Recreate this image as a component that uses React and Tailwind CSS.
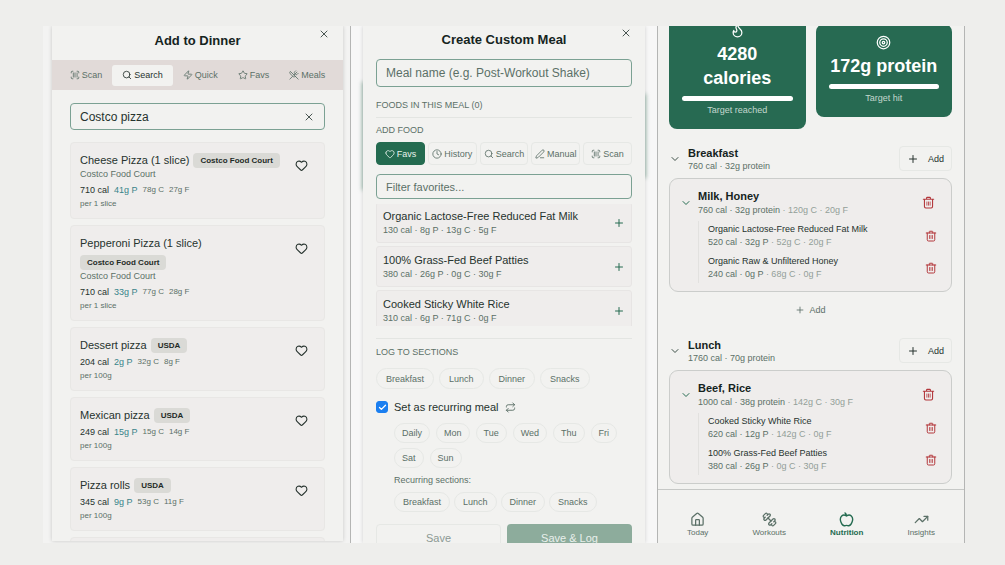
import React from "react";
import {
  ChevronDown, Clock, Flame, Heart, House, PenLine, Plus, Repeat,
  ScanBarcode, Search, Star, Target, TrendingUp, UtensilsCrossed, X, Zap, Check,
} from "lucide-react";

function Svg({ size, children }) {
  return (
    <svg width={size} height={size} viewBox="0 0 24 24" fill="none" stroke="currentColor" strokeWidth="2" strokeLinecap="round" strokeLinejoin="round" aria-hidden="true">
      {children}
    </svg>
  );
}

function TrashIcon({ size }) {
  return (
    <Svg size={size}>
      <path d="M2.5 6h19M8.5 6V3.5a1 1 0 0 1 1-1h5a1 1 0 0 1 1 1V6M4.5 6v13.5a2.5 2.5 0 0 0 2.5 2.5h10a2.5 2.5 0 0 0 2.5-2.5V6" />
      <path strokeWidth="1.5" d="M9 11v6M12 11v6M15 11v6" />
    </Svg>
  );
}

function AppleIcon({ size }) {
  return (
    <Svg size={size}>
      <path strokeWidth="2.2" d="M12 6.5C9.5 4.500 6.500 4.300 4.300 6.300 1.800 8.700 1.800 13 3.200 16.500 4.400 19.700 6.300 22 8.600 22c1.300 0 2-.7 3.400-.7s2.100.7 3.400.7c2.300 0 4.200-2.300 5.400-5.500 1.400-3.500 1.400-7.800-1.100-10.200C17.500 4.300 14.500 4.500 12 6.500ZM12 6.500C12 4.500 11.500 2.500 9.500 1.500" />
    </Svg>
  );
}

function DumbbellIcon({ size }) {
  return (
    <Svg size={size}>
      <path d="M14.400 14.400 9.600 9.600" />
      <path d="M18.657 21.485a2 2 0 1 1-2.829-2.828l-1.767 1.768a2 2 0 1 1-2.829-2.829l6.364-6.364a2 2 0 1 1 2.829 2.829l-1.768 1.767a2 2 0 1 1 2.828 2.829z" />
      <path d="M6.404 12.768a2 2 0 1 1-2.829-2.829l1.768-1.767a2 2 0 1 1-2.828-2.829l2.828-2.828a2 2 0 1 1 2.829 2.828l1.767-1.768a2 2 0 1 1 2.829 2.829z" />
    </Svg>
  );
}

const SEARCH_TABS = [
  { label: "Scan", Icon: ScanBarcode },
  { label: "Search", Icon: Search, active: true },
  { label: "Quick", Icon: Zap },
  { label: "Favs", Icon: Star },
  { label: "Meals", Icon: UtensilsCrossed },
];

const RESULTS = [
  { name: "Cheese Pizza (1 slice)", badge: "Costco Food Court", brand: "Costco Food Court", cal: 710, p: 41, c: 78, f: 27, per: "per 1 slice" },
  { name: "Pepperoni Pizza (1 slice)", badge: "Costco Food Court", brand: "Costco Food Court", cal: 710, p: 33, c: 77, f: 28, per: "per 1 slice" },
  { name: "Dessert pizza", badge: "USDA", cal: 204, p: 2, c: 32, f: 8, per: "per 100g" },
  { name: "Mexican pizza", badge: "USDA", cal: 249, p: 15, c: 15, f: 14, per: "per 100g" },
  { name: "Pizza rolls", badge: "USDA", cal: 345, p: 9, c: 53, f: 11, per: "per 100g" },
];

const MEAL_TABS = [
  { label: "Favs", Icon: Heart, active: true },
  { label: "History", Icon: Clock },
  { label: "Search", Icon: Search },
  { label: "Manual", Icon: PenLine },
  { label: "Scan", Icon: ScanBarcode },
];

const FAVORITES = [
  { name: "Organic Lactose-Free Reduced Fat Milk", meta: "130 cal · 8g P · 13g C · 5g F" },
  { name: "100% Grass-Fed Beef Patties", meta: "380 cal · 26g P · 0g C · 30g F" },
  { name: "Cooked Sticky White Rice", meta: "310 cal · 6g P · 71g C · 0g F" },
];

const SECTIONS = ["Breakfast", "Lunch", "Dinner", "Snacks"];
const DAYS = ["Daily", "Mon", "Tue", "Wed", "Thu", "Fri", "Sat", "Sun"];

const MEALS = [
  {
    section: "Breakfast", total: "760 cal · 32g protein", name: "Milk, Honey",
    main: "760 cal · 32g protein", rest: " · 120g C · 20g F", more: true,
    items: [
      { name: "Organic Lactose-Free Reduced Fat Milk", main: "520 cal · 32g P", rest: " · 52g C · 20g F" },
      { name: "Organic Raw & Unfiltered Honey", main: "240 cal · 0g P", rest: " · 68g C · 0g F" },
    ],
  },
  {
    section: "Lunch", total: "1760 cal · 70g protein", name: "Beef, Rice",
    main: "1000 cal · 38g protein", rest: " · 142g C · 30g F",
    items: [
      { name: "Cooked Sticky White Rice", main: "620 cal · 12g P", rest: " · 142g C · 0g F" },
      { name: "100% Grass-Fed Beef Patties", main: "380 cal · 26g P", rest: " · 0g C · 30g F" },
    ],
  },
];

const NAV = [
  { label: "Today", Icon: House },
  { label: "Workouts", Icon: DumbbellIcon },
  { label: "Nutrition", Icon: AppleIcon, active: true },
  { label: "Insights", Icon: TrendingUp },
];

function ResultCard({ item }) {
  return (
    <li className="flex rounded-[4px] border border-[#e8e7e5] bg-[#efedec] pt-[10px] pr-2 pb-[9px] pl-[9px]">
      <div className="min-w-0 flex-1">
        <div className="flex flex-wrap items-center gap-1">
          <h3 className="text-[11px] leading-[15px] text-[#26332e]">{item.name}</h3>
          <span className="rounded-[4px] bg-[#dadad6] px-[7px] text-[8px] leading-[15px] font-bold text-[#1f2b27]">{item.badge}</span>
        </div>
        {item.brand && <p className="text-[9px] leading-[13px] text-[#5b7067]">{item.brand}</p>}
        <p className="mt-[3px] flex items-center gap-[5px] text-[9px] leading-[12px]">
          <span className="text-[#26332e]">{item.cal} cal</span>
          <span className="text-[#38848a]">{item.p}g P</span>
          <span className="text-[8px] text-[#5b7067]">{item.c}g C</span>
          <span className="text-[8px] text-[#5b7067]">{item.f}g F</span>
        </p>
        <p className="mt-0.5 text-[8px] leading-[11px] text-[#5b7067]">{item.per}</p>
      </div>
      <button aria-label={`Favorite ${item.name}`} className="mt-px flex h-[22px] w-[30px] items-center justify-center text-[#26332e]">
        <Heart size={13} strokeWidth={2} />
      </button>
    </li>
  );
}

function AddToDinner() {
  return (
    <section className="flex min-w-0 overflow-hidden border-r border-[#b4b5b4] bg-[#f3f3f2] pr-[7px] pl-[9px]">
      <div className="mb-0.5 flex min-w-0 flex-1 flex-col overflow-hidden bg-[#f2f2f0] shadow-[0_0_4px_rgba(0,0,0,0.18)]">
        <header className="relative flex h-[34px] shrink-0 items-center justify-center pb-[4px]">
          <h2 className="text-[13px] leading-[16px] font-bold text-[#15241e]">Add to Dinner</h2>
          <button aria-label="Close" className="absolute top-[2px] right-[13px] text-[#4a5652]"><X size={12} /></button>
        </header>
        <nav className="flex h-[30px] shrink-0 items-center justify-center bg-[#e1dad8]">
          {SEARCH_TABS.map(({ label, Icon, active }) => (
            <button key={label} className={`flex h-[21px] items-center gap-0.5 rounded-[3px] px-[10px] text-[9px] leading-[12px] ${active ? "bg-[#f2f2f0] text-[#26332e]" : "text-[#5b7067]"}`}>
              <Icon size={10} />{label}
            </button>
          ))}
        </nav>
        <div className="flex min-h-0 flex-1 flex-col gap-3 overflow-hidden px-[18px] pt-[13px]">
          <div className="flex h-[27px] shrink-0 items-center rounded-[4px] border border-[#7ba193] pr-[9px] pl-[9px]">
            <input aria-label="Search foods" defaultValue="Costco pizza" className="min-w-0 flex-1 bg-transparent text-[12px] text-[#26332e] outline-none" />
            <button aria-label="Clear search" className="text-[#4a5652]"><X size={12} /></button>
          </div>
          <ul className="flex flex-col gap-1.5">
            {RESULTS.map((item) => <ResultCard key={item.name} item={item} />)}
            <li className="h-3 shrink-0 rounded-t-[4px] border border-[#e8e7e5] bg-[#efedec]" />
          </ul>
        </div>
      </div>
    </section>
  );
}

const PILL_SIZES = {
  day: "h-5 px-[7px]",
  small: "h-5 px-2",
  base: "h-[21px] px-[9px]",
};

function Pill({ children, size = "base" }) {
  return (
    <button className={`rounded-full border border-[#e6e8e5] text-[9px] leading-[12px] text-[#5b7067] ${PILL_SIZES[size]}`}>{children}</button>
  );
}

function CreateMeal() {
  return (
    <section className="relative isolate flex min-w-0 overflow-hidden border-r border-[#b4b5b4] bg-[#f7f7f7] px-3">
      <div className="absolute top-[56px] left-[11px] -z-10 h-[108px] w-3 bg-[#9fbcaf] blur-[2px]" />
      <div className="absolute top-[68px] right-[11px] -z-10 h-[84px] w-3 bg-[#9fbcaf] blur-[2px]" />
      <div className="flex min-w-0 flex-1 flex-col bg-[#f2f2f0] px-[13px] shadow-[0_0_4px_rgba(0,0,0,0.16)]">
        <header className="relative flex h-[33px] shrink-0 items-center justify-center pb-[6px]">
          <h2 className="text-[13px] leading-[16px] font-bold text-[#15241e]">Create Custom Meal</h2>
          <button aria-label="Close" className="absolute top-px right-0 text-[#4a5652]"><X size={12} /></button>
        </header>
        <input aria-label="Meal name" placeholder="Meal name (e.g. Post-Workout Shake)" className="h-[28px] shrink-0 rounded-[4px] border border-[#7ba193] px-[9px] text-[12px] outline-none placeholder:text-[#5b7067]" />
        <h3 className="mt-3 text-[9px] leading-[12px] text-[#5b7067]">FOODS IN THIS MEAL (0)</h3>
        <hr className="mt-1.5 border-[#e3e5e2]" />
        <h3 className="mt-1.5 text-[9px] leading-[12px] text-[#5b7067]">ADD FOOD</h3>
        <div className="mt-1.5 grid shrink-0 grid-cols-5 gap-[3px]">
          {MEAL_TABS.map(({ label, Icon, active }) => (
            <button key={label} className={`flex h-[23px] items-center justify-center gap-0.5 rounded-[4px] border text-[9px] leading-[12px] ${active ? "border-[#246b50] bg-[#246b50] text-[#e8f2ec]" : "border-[#e6e8e5] text-[#5b7067]"}`}>
              <Icon size={10} className="shrink-0" />{label}
            </button>
          ))}
        </div>
        <input aria-label="Filter favorites" placeholder="Filter favorites..." className="mt-[9px] h-[25px] shrink-0 rounded-[4px] border border-[#7ba193] px-[9px] text-[11px] outline-none placeholder:text-[#5b7067]" />
        <div className="mt-[5px] h-[122px] shrink-0 overflow-hidden">
          <ul className="-mt-0.5 flex flex-col gap-[3px]">
            {FAVORITES.map((f) => (
              <li key={f.name} className="flex items-center justify-between rounded-[3px] border border-[#e7e5e4] bg-[#efedec] px-1.5 py-1.5">
                <div>
                  <p className="text-[11px] leading-[15px] text-[#26332e]">{f.name}</p>
                  <p className="text-[9px] leading-[12px] text-[#5b7067]">{f.meta}</p>
                </div>
                <button aria-label={`Add ${f.name}`} className="text-[#246b50]"><Plus size={12} /></button>
              </li>
            ))}
          </ul>
        </div>
        <hr className="mt-3 border-[#e3e5e2]" />
        <h3 className="mt-[7px] text-[9px] leading-[12px] text-[#5b7067]">LOG TO SECTIONS</h3>
        <div className="mt-[10px] flex flex-wrap gap-[5px]">
          {SECTIONS.map((s) => <Pill key={s}>{s}</Pill>)}
        </div>
        <label className="mt-[11px] flex items-center gap-1.5 text-[11px] leading-[14px] text-[#26332e]">
          <span className="grid size-3 place-items-center">
            <input type="checkbox" defaultChecked className="peer col-start-1 row-start-1 size-3 appearance-none rounded-[3px] border border-[#9aa] checked:border-[#1b7ff0] checked:bg-[#1b7ff0]" />
            <Check size={9} strokeWidth={3.5} className="pointer-events-none invisible col-start-1 row-start-1 text-white peer-checked:visible" />
          </span>
          Set as recurring meal
          <Repeat size={11} className="text-[#5b7067]" />
        </label>
        <div className="mt-[9px] flex flex-col gap-1.5 pl-[18px]">
          <div className="flex flex-wrap gap-x-[6px] gap-y-[5px]">
            {DAYS.map((d) => <Pill key={d} size="day">{d}</Pill>)}
          </div>
          <p className="text-[9px] leading-[12px] text-[#5b7067]">Recurring sections:</p>
          <div className="flex flex-wrap gap-1">
            {SECTIONS.map((s) => <Pill key={s} size="small">{s}</Pill>)}
          </div>
        </div>
        <div className="mt-3 grid shrink-0 grid-cols-2 gap-1.5 text-[11px]">
          <button className="h-[28px] rounded-[4px] border border-[#e6e8e5] text-[#8c9994]">Save</button>
          <button className="h-[28px] rounded-[4px] bg-[#8dac9c] text-[#e9f0ec]">Save &amp; Log</button>
        </div>
      </div>
    </section>
  );
}

function StatCard({ Icon, title, note }) {
  return (
    <div className="flex min-w-0 flex-1 flex-col items-center rounded-lg bg-[#276a52] px-[13px] pt-[11px] pb-[13px] text-white">
      <Icon size={15} />
      <p className="mt-1 text-center text-[18px] leading-[24px] font-bold">{title}</p>
      <div className="mt-1.5 h-[5px] w-full rounded-full bg-white" />
      <p className="mt-[3px] text-[9px] leading-[12px] text-[#c3d8ce]">{note}</p>
    </div>
  );
}

function MealSection({ meal }) {
  return (
    <section>
      <div className="flex h-[25px] items-center">
        <button aria-label={`Toggle ${meal.section}`} className="mr-[7px] text-[#3c4f47]"><ChevronDown size={12} /></button>
        <div className="flex-1">
          <h2 className="text-[11px] leading-[14px] font-bold text-[#15241e]">{meal.section}</h2>
          <p className="text-[9px] leading-[12px] text-[#5b7067]">{meal.total}</p>
        </div>
        <button className="flex h-[25px] items-center gap-[9px] rounded-[4px] border border-[#e6e8e5] px-[7px] text-[9px] leading-[12px] text-[#26332e]">
          <Plus size={12} />Add
        </button>
      </div>
      <article className="mt-[7px] rounded-[9px] border border-[#cbcdcb] bg-[#efedec] pt-[10px] pb-2 pl-[10px]">
        <div className="flex items-center pr-[16px]">
          <button aria-label={`Toggle ${meal.name}`} className="mr-[6px] text-[#246b50]"><ChevronDown size={12} /></button>
          <div className="flex-1">
            <h3 className="text-[11px] leading-[15px] font-bold text-[#15241e]">{meal.name}</h3>
            <p className="text-[9px] leading-[12px] text-[#5b7067]">{meal.main}<span className="text-[#939f99]">{meal.rest}</span></p>
          </div>
          <button aria-label={`Delete ${meal.name}`} className="text-[#b3373b]"><TrashIcon size={13} /></button>
        </div>
        <ul className="mt-[5px] ml-[18px] flex flex-col gap-1.5 border-l border-[#e2e1df] py-0.5 pr-[14px] pl-[9px]">
          {meal.items.map((i) => (
            <li key={i.name} className="flex items-center justify-between">
              <div>
                <p className="text-[9px] leading-[12px] text-[#26332e]">{i.name}</p>
                <p className="text-[9px] leading-[14px] text-[#5b7067]">{i.main}<span className="text-[#939f99]">{i.rest}</span></p>
              </div>
              <button aria-label={`Delete ${i.name}`} className="text-[#b3373b]"><TrashIcon size={12} /></button>
            </li>
          ))}
        </ul>
      </article>
      {meal.more && (
        <button className="mt-2 flex h-5 w-full items-center justify-center gap-1 text-[9px] leading-[12px] text-[#5b7067]"><Plus size={10} />Add</button>
      )}
    </section>
  );
}

function Nutrition() {
  return (
    <section className="flex min-w-0 flex-col overflow-hidden border-r border-[#b4b5b4] bg-[#f2f2f0]">
      <main className="min-h-0 flex-1 overflow-hidden pr-3 pl-[11px]">
        <div className="-mt-[14px] flex items-center gap-[10px]">
          <StatCard Icon={Flame} title="4280 calories" note="Target reached" />
          <StatCard Icon={Target} title="172g protein" note="Target hit" />
        </div>
        <div className="mt-[17px] flex flex-col gap-[18px]">
          {MEALS.map((m) => <MealSection key={m.section} meal={m} />)}
        </div>
      </main>
      <nav className="flex h-[54px] shrink-0 items-end justify-between border-t border-[#c6c8c6] px-[29px] pb-[5px]">
        {NAV.map(({ label, Icon, active }) => (
          <a key={label} href="#" className={`flex flex-col items-center gap-px text-[8px] leading-[10px] ${active ? "font-bold text-[#246b50]" : "text-[#5b7067]"}`}>
            <Icon size={15} />{label}
          </a>
        ))}
      </nav>
    </section>
  );
}

export default function App() {
  return (
    <div className="flex h-screen bg-[#eeeeec] pt-[26px] pr-10 pb-[22px] pl-[43px] font-['Liberation_Sans',Arial,sans-serif]">
      <div className="grid min-h-0 flex-1 grid-cols-[308fr_307fr_307fr] grid-rows-[minmax(0,1fr)]">
        <AddToDinner />
        <CreateMeal />
        <Nutrition />
      </div>
    </div>
  );
}
